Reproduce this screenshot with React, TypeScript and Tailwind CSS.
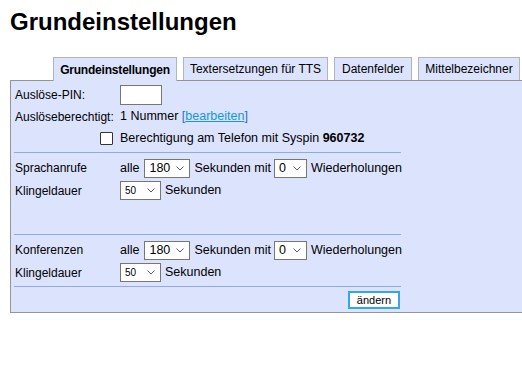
import type { ReactNode } from 'react'

const tabs = [
  { label: 'Grundeinstellungen', w: 'w-[124px]', active: true },
  { label: 'Textersetzungen für TTS', w: 'w-[145px]', active: false },
  { label: 'Datenfelder', w: 'w-[78px]', active: false },
  { label: 'Mittelbezeichner', w: 'w-[102px]', active: false },
]

function Chevron() {
  return (
    <svg width="8" height="5" viewBox="0 0 8 5" className="shrink-0">
      <path d="M0.5 0.5 L4 4 L7.5 0.5" fill="none" stroke="#5a5a5a" strokeWidth="1" />
    </svg>
  )
}

function Select({ value, className, small }: { value: string; className: string; small?: boolean }) {
  return (
    <span
      className={`inline-flex h-[19px] shrink-0 items-center justify-between border border-[#767676] bg-white pl-[4px] pr-[5px] ${className}`}
    >
      <span className={small ? 'text-[10px] leading-none' : 'text-[12.5px] leading-none'}>{value}</span>
      <Chevron />
    </span>
  )
}

function Row({ label, h, children }: { label?: ReactNode; h: string; children?: ReactNode }) {
  return (
    <div className={`flex items-center pl-[1px] ${h}`}>
      <div className="w-[105px] shrink-0 text-[12px]">{label}</div>
      <div className="flex items-center whitespace-nowrap">{children}</div>
    </div>
  )
}

function Separator({ className = '' }: { className?: string }) {
  return <div className={`h-px bg-[#90a9ec] ${className}`} />
}

function Repeat({ label }: { label: string }) {
  return (
    <Row label={label} h="h-[22px]">
      alle
      <Select value="180" className="ml-[5px] w-[46px]" />
      <span className="ml-[4px]">Sekunden mit</span>
      <Select value="0" className="ml-[3px] w-[33px]" />
      <span className="ml-[4px]">Wiederholungen</span>
    </Row>
  )
}

function Ring() {
  return (
    <Row label="Klingeldauer" h="h-[23px]">
      <Select value="50" small className="w-[41px]" />
      <span className="ml-[4px]">Sekunden</span>
    </Row>
  )
}

export default function App() {
  return (
    <div
      className="h-[365px] w-[522px] overflow-hidden bg-white px-[10px] text-[12.5px] text-black"
      style={{ fontFamily: '"Liberation Sans", Arial, sans-serif' }}
    >
      <h1 className="pt-[8px] text-[24px] font-bold leading-[28px]">Grundeinstellungen</h1>

      <div className="relative z-10 -mb-px mt-[21px] flex items-end gap-[6px] pl-[43px] text-[12px]">
        {tabs.map((t) =>
          t.active ? (
            <div
              key={t.label}
              className={`flex h-[24px] shrink-0 items-center justify-center border border-b-0 border-[#b4b4b4] bg-[#dce3fd] font-bold tracking-[-0.2px] ${t.w}`}
            >
              {t.label}
            </div>
          ) : (
            <div
              key={t.label}
              className={`mb-px flex h-[23px] shrink-0 items-center justify-center border border-b-0 border-[#b4b4b4] bg-[#dce3fd] ${t.w}`}
            >
              {t.label}
            </div>
          ),
        )}
      </div>

      <div className="w-[530px] border border-[#959595] bg-[#dce3fd] pb-[3px]">
        <div className="ml-[3px] w-[387px]">
          <div className="mt-[3px]">
            <Row label="Auslöse-PIN:" h="h-[22px]">
              <span className="block h-[20px] w-[42px] border border-[#767676] bg-white" />
            </Row>
            <Row label="Auslöseberechtigt:" h="h-[21px]">
              1 Nummer&nbsp;
              <span className="text-[#2b6fc0]">[</span>
              <a href="#" className="text-[#1596e0] underline">
                bearbeiten
              </a>
              <span className="text-[#2b6fc0]">]</span>
            </Row>
            <Row
              h="h-[23px]"
              label={
                <div className="flex justify-end pr-[7px]">
                  <span className="block h-[13px] w-[13px] rounded-[1px] border border-[#333] bg-white" />
                </div>
              }
            >
              Berechtigung am Telefon mit Syspin&nbsp;<b>960732</b>
            </Row>
          </div>

          <Separator className="mt-[2px]" />
          <div className="mt-[4px]">
            <Repeat label="Sprachanrufe" />
            <Ring />
          </div>

          <Separator className="mt-[32px]" />
          <div className="mt-[4px]">
            <Repeat label="Konferenzen" />
            <Ring />
          </div>

          <Separator className="mt-[2px]" />
          <div className="mt-[4px] flex justify-end pr-[1px]">
            <button
              type="button"
              className="h-[18px] w-[52px] border-2 border-[#36a6ea] bg-white text-[11px] leading-none text-black"
            >
              ändern
            </button>
          </div>
        </div>
      </div>
    </div>
  )
}
